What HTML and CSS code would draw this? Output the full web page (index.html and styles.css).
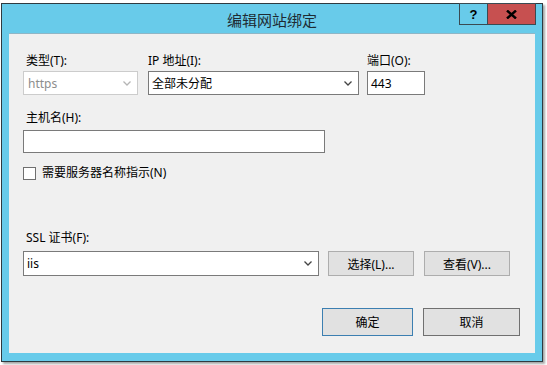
FILE: index.html
```html
<!doctype html>
<html lang="zh-CN">
<head>
	<meta charset="UTF-8">
	<title>编辑网站绑定</title>
	<link rel="stylesheet" href="styles.css">
</head>
<body>
	<div class="window">
		<div class="titlebar">
			<span class="title">编辑网站绑定</span>
			<div class="caption-btns">
				<span class="cap help">?</span>
				<span class="cap close">
					<svg width="11" height="9" viewBox="0 0 11 9"><path d="M1 0.5 L10 8.5 M10 0.5 L1 8.5" stroke="#000" stroke-width="2.4"/></svg>
				</span>
			</div>
		</div>
		<div class="content">
			<div class="row">
				<div class="field f-type">
					<div class="label">类型(T):</div>
					<div class="select disabled">
						<span class="val">https</span>
						<svg class="chev" width="8" height="5" viewBox="0 0 8 5"><path d="M0.5 0.5 L4 4 L7.5 0.5" fill="none" stroke="#b5b5b5" stroke-width="1.3"/></svg>
					</div>
				</div>
				<div class="field f-ip">
					<div class="label">IP 地址(I):</div>
					<div class="select">
						<span class="val">全部未分配</span>
						<svg class="chev" width="8" height="5" viewBox="0 0 8 5"><path d="M0.5 0.5 L4 4 L7.5 0.5" fill="none" stroke="#444" stroke-width="1.3"/></svg>
					</div>
				</div>
				<div class="field f-port">
					<div class="label">端口(O):</div>
					<div class="input">443</div>
				</div>
			</div>

			<div class="field f-host">
				<div class="label">主机名(H):</div>
				<div class="input host"></div>
			</div>

			<div class="check">
				<span class="box"></span>
				<span>需要服务器名称指示(N)</span>
			</div>

			<div class="field f-ssl">
				<div class="label">SSL 证书(F):</div>
				<div class="ssl-row">
					<div class="select ssl">
						<span class="val">iis</span>
						<svg class="chev" width="8" height="5" viewBox="0 0 8 5"><path d="M0.5 0.5 L4 4 L7.5 0.5" fill="none" stroke="#444" stroke-width="1.3"/></svg>
					</div>
					<span class="btn pick">选择(L)...</span>
					<span class="btn pick">查看(V)...</span>
				</div>
			</div>

			<div class="actions">
				<span class="btn ok">确定</span>
				<span class="btn cancel">取消</span>
			</div>
		</div>
	</div>
</body>
</html>
```

FILE: styles.css
```css
*{padding: 0; margin: 0; box-sizing: border-box;}
body{
	background: #fff; width: 547px; height: 365px; overflow: hidden;
	font-family: "Noto Sans", "Noto Sans CJK SC", sans-serif;
	font-size: 12px; color: #000;
}
.window{
	margin: 3px 0 0 1px; width: 542px; height: 359px;
	border: 1px solid #2f3a40; background: #68cbea;
	box-shadow: 2px 2px 2px rgba(0,0,0,.35);
	display: flex; flex-direction: column; position: relative;
}
.titlebar{
	height: 29px; display: flex; align-items: center; justify-content: center;
}
.title{
	font-family: "Noto Sans CJK SC", sans-serif; font-size: 15px;
	color: #1e2b33; padding-top: 2px;
}
.caption-btns{
	position: absolute; top: -1px; right: 6px; display: flex;
}
.cap{
	height: 22px; border: 1px solid #3a4a52; display: flex;
	align-items: center; justify-content: center;
}
.help{
	width: 29px; font-family: "Liberation Sans", sans-serif;
	font-weight: bold; font-size: 13px;
}
.close{
	width: 48px; background: #c75050; border-left: none;
}
.content{
	margin: 0 7px; height: 320px; background: #f0f0f0;
	border-top: 1px solid #8fb6c6;
	padding: 19px 0 0 14px; display: flex; flex-direction: column;
}
.row{display: flex;}
.label{line-height: 16px; padding-left: 3px; margin-bottom: 2px; white-space: nowrap;}
.f-ip .label, .f-port .label{padding-left: 0;}
.f-type{width: 115px; margin-right: 10px;}
.f-ip{width: 211px; margin-right: 8px;}
.f-port{width: 58px;}
.select, .input{
	height: 24px; background: #fff; border: 1px solid #7a7a7a;
	display: flex; align-items: center; padding: 0 6px 0 3px;
}
.select .val{flex: 1;}
.select.disabled{border-color: #cccccc; color: #8d8d8d;}
.select.disabled .val{padding-left: 1px;}
.chev{display: block;}
.f-host{margin-top: 15px;}
.f-host .label{margin-bottom: 4px;}
.input.host{width: 302px; height: 23px;}
.check{
	margin-top: 12px; height: 16px; display: flex; align-items: center;
	line-height: 16px;
}
.check .box{
	width: 13px; height: 13px; border: 1px solid #6f6f6f; background: #fff;
	margin-right: 6px;
}
.f-ssl{margin-top: 49px;}
.f-ssl .label{margin-bottom: 5px;}
.ssl-row{display: flex; gap: 9px;}
.select.ssl{width: 296px; height: 25px;}
.btn{
	display: flex; align-items: center; justify-content: center;
	background: #e1e1e1; border: 1px solid #adadad;
}
.pick{width: 86px; height: 25px;}
.pick + .pick{margin-left: 1px;}
.actions{
	margin-top: 32px; display: flex; justify-content: flex-end;
	gap: 10px; padding-right: 15px;
}
.ok{width: 91px; height: 28px; border-color: #3c7fb1;}
.cancel{width: 97px; height: 28px; border-color: #707070;}
```
